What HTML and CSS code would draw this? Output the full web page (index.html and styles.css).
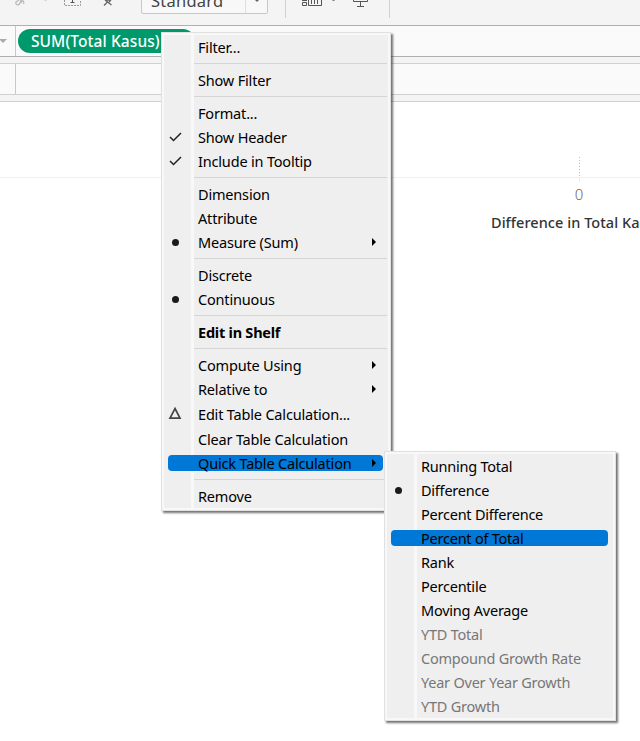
FILE: index.html
```html
<!DOCTYPE html>
<html lang="en">
<head>
<meta charset="utf-8">
<title>Worksheet</title>
<link rel="stylesheet" href="styles.css">
</head>
<body>
<header class="toolbar">
  <svg class="tools" width="640" height="25" viewBox="0 0 640 25" fill="none">
    <path d="M19 0l-3 2c-1 3 3 4 4 1l1-3M22 0l-1 3M20.500 1c2-1 4 0 3 3" stroke="#b8b8b8" stroke-width="1.200"/>
    <path d="M44.500 0h2" stroke="#aaa"/>
    <path d="M64.500 0v5.500h16V0" stroke="#999" stroke-dasharray="2 1"/>
    <path d="M72.500 0v2M70.500 2.500h4" stroke="#555"/>
    <path d="M104 5.500l4-4M105 0l6.500 5M111 0l-2 2M106 0h5" stroke="#666" stroke-width="1.300"/>
    <path d="M285.500 0v18M389.500 0v18" stroke="#d0d0d0"/>
    <path d="M302 .5h5M302.500 2.500h4v3h-4zM308.500 0v5.500h13V0M311.500 0v4M314.500 0v4M317.500 0v4" stroke="#555"/>
    <path d="M332.500 .5h2" stroke="#777"/>
    <path d="M353.500 0v1.500h14V0M360.500 2v4M357 6.500h7" stroke="#555"/>
  </svg>
  <div class="fit"><span>Standard</span><i></i></div>
</header>
<section class="shelf columns"><div class="shelf-name"><i class="caret"></i></div><div class="pill">SUM(Total Kasus)</div></section>
<section class="shelf rows"><div class="shelf-name"></div></section>
<main class="view">
  <div class="plot"><i class="zero-line"></i></div>
  <div class="axis"><i class="tick"></i><span class="zero">0</span><span class="axis-title">Difference in Total Kasus</span></div>
</main>

<nav class="menu main-menu">
  <div class="item">Filter...</div>
  <hr>
  <div class="item">Show Filter</div>
  <hr>
  <div class="item">Format...</div>
  <div class="item"><svg class="mark" viewBox="0 0 14 14"><path d="M2 7l3.500 3.500L13 3"/></svg>Show Header</div>
  <div class="item"><svg class="mark" viewBox="0 0 14 14"><path d="M2 7l3.500 3.500L13 3"/></svg>Include in Tooltip</div>
  <hr>
  <div class="item">Dimension</div>
  <div class="item">Attribute</div>
  <div class="item sub"><i class="dot"></i>Measure (Sum)</div>
  <hr>
  <div class="item">Discrete</div>
  <div class="item"><i class="dot"></i>Continuous</div>
  <hr>
  <div class="item bold">Edit in Shelf</div>
  <hr>
  <div class="item sub">Compute Using</div>
  <div class="item sub">Relative to</div>
  <div class="item tall"><svg class="mark delta" viewBox="0 0 14 14"><path d="M7 2.500L12 12.200H2z"/></svg>Edit Table Calculation...</div>
  <div class="item">Clear Table Calculation</div>
  <div class="item sub active">Quick Table Calculation</div>
  <hr>
  <div class="item">Remove</div>
</nav>

<nav class="menu sub-menu">
  <div class="item">Running Total</div>
  <div class="item"><i class="dot"></i>Difference</div>
  <div class="item">Percent Difference</div>
  <div class="item active">Percent of Total</div>
  <div class="item">Rank</div>
  <div class="item">Percentile</div>
  <div class="item">Moving Average</div>
  <div class="item off">YTD Total</div>
  <div class="item off">Compound Growth Rate</div>
  <div class="item off">Year Over Year Growth</div>
  <div class="item off">YTD Growth</div>
</nav>
</body>
</html>
```

FILE: styles.css
```css
* { box-sizing: border-box; }
body {
  margin: 0;
  width: 640px;
  height: 741px;
  overflow: hidden;
  position: relative;
  background: #f4f4f4;
  font-family: "Noto Sans", sans-serif;
  display: flex;
  flex-direction: column;
}
.toolbar { height: 25px; flex: none; position: relative; }
.tools { display: block; }
.fit {
  position: absolute;
  left: 141px;
  top: -12px;
  width: 127px;
  height: 26px;
  border: 1px solid #c8c8c8;
  border-radius: 2px;
  background: #f8f8f8;
  display: flex;
  justify-content: space-between;
  font-size: 16.500px;
  line-height: 24px;
  letter-spacing: 0.250px;
  color: #444;
  padding-left: 9px;
}
.fit i { width: 22px; border-left: 1px solid #e0e0e0; }
.fit i::after {
  content: "";
  display: block;
  margin: 10px 0 0 8px;
  width: 0;
  border: 3px solid transparent;
  border-top-color: #666;
}
.shelf {
  flex: none;
  display: flex;
  border: solid #d0d0d0;
  border-width: 1px 0;
  background: #fafafa;
}
.columns { height: 32px; border-color: #b0b0b0; }
.rows { height: 32px; margin-top: 6px; }
.shelf-name { width: 16px; border-right: 1px solid #c8c8c8; }
.caret {
  display: block;
  width: 0;
  margin: 13px 0 0 -1px;
  border: 4px solid transparent;
  border-top-color: #aaa;
}
.pill {
  margin: 3px 0 0 2px;
  width: 177px;
  height: 24px;
  border-radius: 12px;
  background: #00996b;
  color: #fff;
  font-size: 15.500px;
  font-weight: 500;
  letter-spacing: 0.080px;
  line-height: 25px;
  padding-left: 13px;
  white-space: nowrap;
}
.view { margin-top: 6px; flex: 1; background: #fff; border-top: 1px solid #d0d0d0; }
.plot { height: 76px; border-bottom: 1px solid #f0f0f0; display: flex; align-items: flex-end; padding-left: 579px; }
.zero-line { width: 1px; height: 20px; background: repeating-linear-gradient(#bbb 0 1px, transparent 1px 3px); }
.axis { display: flex; flex-direction: column; align-items: center; width: 176px; margin-left: 491px; }
.tick { width: 1px; height: 4px; background: #eee; }
.zero { font-size: 15px; font-weight: 300; line-height: 22px; color: #666; margin: 1px 0 2px; }
.axis-title { font-size: 14.500px; font-weight: 500; letter-spacing: 0.050px; line-height: 20px; margin-top: 5px; color: #333; white-space: nowrap; align-self: flex-start; }

.menu {
  position: absolute;
  border: 1px solid #e0e0e0;
  outline: 2px solid #f8f8f8;
  outline-offset: -3px;
  background: linear-gradient(#f8f8f8, #f8f8f8) 29px 0 / 3px 100% no-repeat #efefef;
  box-shadow: 2px 2px 2px rgba(0, 0, 0, 0.550);
  font-size: 14.500px;
  letter-spacing: -0.180px;
  color: #000;
}
.main-menu { left: 161px; top: 32px; width: 230px; height: 479px; padding-top: 3px; }
.sub-menu { left: 384px; top: 451px; width: 232px; height: 270px; padding-top: 3px; letter-spacing: -0.230px; }
.item {
  position: relative;
  height: 24px;
  line-height: 22px;
  padding-left: 36px;
  white-space: nowrap;
}
.tall { height: 26px; line-height: 24px; }
.bold { font-weight: 700; letter-spacing: -0.230px; }
.off { color: #777; }
hr { margin: 3px 3px 5px 32px; border: 0; height: 1px; background: #d5d5d5; }
.active { z-index: 0; }
.active::before {
  content: "";
  position: absolute;
  z-index: -1;
  left: 6px;
  right: 7px;
  top: 3px;
  height: 16px;
  border-radius: 4px;
  background: #0078d7;
}
.sub::after {
  content: "";
  position: absolute;
  left: 210px;
  top: 7px;
  border: 4px solid transparent;
  border-left: 4px solid #000;
  border-right: 0;
}
.dot { position: absolute; left: 10.400px; top: 7.700px; width: 7px; height: 7px; border-radius: 50%; background: #1a1a1a; }
.mark { position: absolute; left: 6px; top: 4px; width: 14px; height: 14px; fill: none; stroke: #222; stroke-width: 1.500; }
.delta { stroke: #444; stroke-width: 1.700; }
```
